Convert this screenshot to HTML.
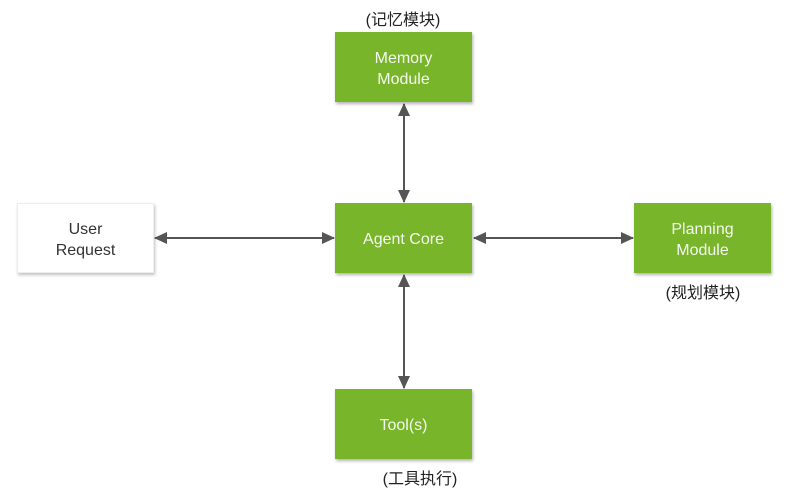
<!DOCTYPE html>
<html><head><meta charset="utf-8"><style>
body{margin:0;width:795px;height:497px;background:#fff;position:relative;overflow:hidden;font-family:"Liberation Sans","Noto Sans CJK SC",sans-serif}
.b{position:absolute;width:137px;height:70px;background:#78b52b;color:#f4f9ee;font-size:16px;line-height:21px;display:flex;align-items:center;justify-content:center;text-align:center;box-shadow:1px 2px 3px rgba(0,0,0,.3);padding-top:3px;box-sizing:border-box}
.w{background:#fff;color:#333;box-shadow:1px 2px 3px rgba(0,0,0,.25);border:1px solid #eee}
.l{position:absolute;font-size:16px;color:#222;white-space:nowrap;transform:translateX(-50%)}
</style></head><body>
<svg width="795" height="497" style="position:absolute;left:0;top:0">
<defs><marker id="a" markerWidth="13" markerHeight="12" refX="12" refY="6" orient="auto-start-reverse" markerUnits="userSpaceOnUse"><path d="M0,0 L13,6 L0,12 z" fill="#555"/></marker></defs>
<g stroke="#555" stroke-width="2" fill="none">
<line x1="404" y1="104" x2="404" y2="202" marker-start="url(#a)" marker-end="url(#a)"/>
<line x1="404" y1="275" x2="404" y2="388" marker-start="url(#a)" marker-end="url(#a)"/>
<line x1="155" y1="238" x2="334" y2="238" marker-start="url(#a)" marker-end="url(#a)"/>
<line x1="474" y1="238" x2="633" y2="238" marker-start="url(#a)" marker-end="url(#a)"/>
</g></svg>
<div class="l" style="left:403px;top:6px">(记忆模块)</div>
<div class="b" style="left:335px;top:32px">Memory<br>Module</div>
<div class="b w" style="left:17px;top:203px">User<br>Request</div>
<div class="b" style="left:335px;top:203px">Agent Core</div>
<div class="b" style="left:634px;top:203px">Planning<br>Module</div>
<div class="l" style="left:703px;top:279px">(规划模块)</div>
<div class="b" style="left:335px;top:389px">Tool(s)</div>
<div class="l" style="left:420px;top:465px">(工具执行)</div>
</body></html>
